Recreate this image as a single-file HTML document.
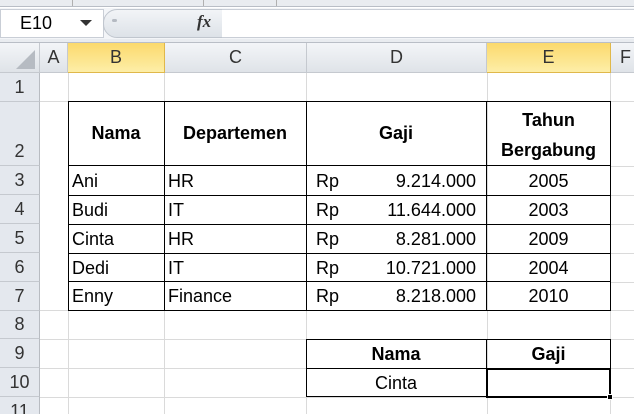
<!DOCTYPE html>
<html><head><meta charset="utf-8"><style>
*{margin:0;padding:0;box-sizing:border-box}
html,body{width:634px;height:414px;overflow:hidden}
body{background:#fff;position:relative;font-family:"Liberation Sans",sans-serif;color:#000}
.a{position:absolute}
.h{background:linear-gradient(#f3f5f8,#dfe3e8);color:#333;font-size:18px;display:flex;align-items:center;justify-content:center;border-right:1px solid #c5c9cf;border-bottom:1px solid #c5c9cf}
.sel{background:linear-gradient(#fbd96c,#fdeea8);border-right:1px solid #e0b84a;border-bottom:1px solid #e0b84a}
.rh{background:#e4e8ee;color:#333;font-size:18px;display:flex;align-items:flex-end;justify-content:center;padding-bottom:3px;border-bottom:1px solid #c5c9cf;border-right:1px solid #b8bcc2}
.vl{position:absolute;width:1px;background:#dadada}
.hl{position:absolute;height:1px;background:#dadada}
.t{position:absolute;font-size:18px;white-space:nowrap;display:flex;align-items:center;height:29px}
.b{font-weight:bold}
.bl{position:absolute;background:#000}
</style></head><body>
<div class="a" style="left:0;top:0;width:634px;height:7px;background:#e9ecf0;border-bottom:1px solid #b9bec6"></div>
<div class="a" style="left:72px;top:0;width:1px;height:6px;background:#b0b0b0"></div>
<div class="a" style="left:203px;top:0;width:1px;height:6px;background:#b0b0b0"></div>
<div class="a" style="left:276px;top:0;width:1px;height:6px;background:#b0b0b0"></div>
<div class="a" style="left:0;top:8px;width:634px;height:32px;background:#f3f5f8"></div>
<div class="a" style="left:0;top:9px;width:104px;height:29px;background:#fff;border:1px solid #c9ced6"></div>
<div class="a" style="left:20px;top:13px;font-size:18px">E10</div>
<div class="a" style="left:80px;top:20px;width:0;height:0;border-left:6px solid transparent;border-right:6px solid transparent;border-top:6px solid #333"></div>
<div class="a" style="left:103px;top:9px;width:120px;height:29px;background:linear-gradient(#f2f4f7,#dde2e8);border-radius:14px 0 0 14px;border:1px solid #c0c6ce"></div>
<div class="a" style="left:112px;top:19px;width:5px;height:3px;background:#b5bac2;border-radius:2px"></div>
<div class="a" style="left:197px;top:12px;font-family:'Liberation Serif',serif;font-style:italic;font-weight:bold;font-size:17px;color:#333">fx</div>
<div class="a" style="left:222px;top:9px;width:412px;height:29px;background:#fff;border-top:1px solid #c9ced6;border-bottom:1px solid #c9ced6"></div>
<div class="a" style="left:0;top:39px;width:634px;height:4px;background:#e9ecf0;border-bottom:1px solid #b9bec6"></div>

<div class="a h" style="left:0;top:43px;width:40px;height:30px"></div>
<div class="a" style="left:16px;top:50px;width:0;height:0;border-left:19px solid transparent;border-bottom:19px solid #b6bbc2"></div>
<div class="a h" style="left:40px;top:43px;width:28px;height:30px">A</div>
<div class="a h sel" style="left:68px;top:43px;width:97px;height:30px">B</div>
<div class="a h" style="left:165px;top:43px;width:142px;height:30px">C</div>
<div class="a h" style="left:307px;top:43px;width:180px;height:30px">D</div>
<div class="a h sel" style="left:487px;top:43px;width:124px;height:30px">E</div>
<div class="a h" style="left:611px;top:43px;width:30px;height:30px">F</div>

<div class="a rh" style="left:0;top:73px;width:40px;height:29px">1</div>
<div class="a rh" style="left:0;top:102px;width:40px;height:64px">2</div>
<div class="a rh" style="left:0;top:166px;width:40px;height:29px">3</div>
<div class="a rh" style="left:0;top:195px;width:40px;height:29px">4</div>
<div class="a rh" style="left:0;top:224px;width:40px;height:29px">5</div>
<div class="a rh" style="left:0;top:253px;width:40px;height:29px">6</div>
<div class="a rh" style="left:0;top:282px;width:40px;height:29px">7</div>
<div class="a rh" style="left:0;top:311px;width:40px;height:28px">8</div>
<div class="a rh" style="left:0;top:339px;width:40px;height:29px">9</div>
<div class="a rh sel" style="left:0;top:368px;width:40px;height:29px">10</div>
<div class="a rh" style="left:0;top:397px;width:40px;height:29px">11</div>

<div class="vl" style="left:68px;top:73px;height:341px"></div>
<div class="vl" style="left:164px;top:73px;height:341px"></div>
<div class="vl" style="left:306px;top:73px;height:341px"></div>
<div class="vl" style="left:487px;top:73px;height:341px"></div>
<div class="vl" style="left:610px;top:73px;height:341px"></div>
<div class="hl" style="left:40px;top:101px;width:594px"></div>
<div class="hl" style="left:40px;top:310px;width:594px"></div>
<div class="hl" style="left:40px;top:339px;width:594px"></div>
<div class="hl" style="left:40px;top:368px;width:594px"></div>
<div class="hl" style="left:40px;top:397px;width:594px"></div>
<div class="hl" style="left:610px;top:166px;width:24px"></div>
<div class="hl" style="left:610px;top:195px;width:24px"></div>
<div class="hl" style="left:610px;top:224px;width:24px"></div>
<div class="hl" style="left:610px;top:253px;width:24px"></div>
<div class="hl" style="left:610px;top:282px;width:24px"></div>

<div class="bl" style="left:68px;top:101px;width:543px;height:1px"></div>
<div class="bl" style="left:68px;top:165px;width:543px;height:1px"></div>
<div class="bl" style="left:68px;top:195px;width:543px;height:1px"></div>
<div class="bl" style="left:68px;top:224px;width:543px;height:1px"></div>
<div class="bl" style="left:68px;top:253px;width:543px;height:1px"></div>
<div class="bl" style="left:68px;top:281px;width:543px;height:1px"></div>
<div class="bl" style="left:68px;top:310px;width:543px;height:1px"></div>
<div class="bl" style="left:68px;top:101px;width:1px;height:210px"></div>
<div class="bl" style="left:164px;top:101px;width:1px;height:210px"></div>
<div class="bl" style="left:306px;top:101px;width:1px;height:210px"></div>
<div class="bl" style="left:486px;top:101px;width:1px;height:210px"></div>
<div class="bl" style="left:610px;top:101px;width:1px;height:210px"></div>

<div class="t b" style="left:68px;top:119px;width:96px;justify-content:center">Nama</div>
<div class="t b" style="left:164px;top:119px;width:142px;justify-content:center">Departemen</div>
<div class="t b" style="left:306px;top:119px;width:180px;justify-content:center">Gaji</div>
<div class="t b" style="left:487px;top:106px;width:123px;justify-content:center">Tahun</div>
<div class="t b" style="left:487px;top:136px;width:123px;justify-content:center">Bergabung</div>

<div class="t" style="left:72px;top:167px">Ani</div>
<div class="t" style="left:72px;top:196px">Budi</div>
<div class="t" style="left:72px;top:225px">Cinta</div>
<div class="t" style="left:72px;top:254px">Dedi</div>
<div class="t" style="left:72px;top:282px">Enny</div>
<div class="t" style="left:168px;top:167px">HR</div>
<div class="t" style="left:168px;top:196px">IT</div>
<div class="t" style="left:168px;top:225px">HR</div>
<div class="t" style="left:168px;top:254px">IT</div>
<div class="t" style="left:168px;top:282px">Finance</div>
<div class="t" style="left:316px;top:167px">Rp</div>
<div class="t" style="left:316px;top:196px">Rp</div>
<div class="t" style="left:316px;top:225px">Rp</div>
<div class="t" style="left:316px;top:254px">Rp</div>
<div class="t" style="left:316px;top:282px">Rp</div>
<div class="t" style="left:340px;top:167px;width:136px;justify-content:flex-end">9.214.000</div>
<div class="t" style="left:340px;top:196px;width:136px;justify-content:flex-end">11.644.000</div>
<div class="t" style="left:340px;top:225px;width:136px;justify-content:flex-end">8.281.000</div>
<div class="t" style="left:340px;top:254px;width:136px;justify-content:flex-end">10.721.000</div>
<div class="t" style="left:340px;top:282px;width:136px;justify-content:flex-end">8.218.000</div>
<div class="t" style="left:487px;top:167px;width:123px;justify-content:center">2005</div>
<div class="t" style="left:487px;top:196px;width:123px;justify-content:center">2003</div>
<div class="t" style="left:487px;top:225px;width:123px;justify-content:center">2009</div>
<div class="t" style="left:487px;top:254px;width:123px;justify-content:center">2004</div>
<div class="t" style="left:487px;top:282px;width:123px;justify-content:center">2010</div>

<div class="bl" style="left:306px;top:339px;width:305px;height:1px"></div>
<div class="bl" style="left:306px;top:368px;width:305px;height:1px"></div>
<div class="bl" style="left:306px;top:396px;width:305px;height:1px"></div>
<div class="bl" style="left:306px;top:339px;width:1px;height:58px"></div>
<div class="bl" style="left:486px;top:339px;width:1px;height:58px"></div>
<div class="bl" style="left:610px;top:339px;width:1px;height:58px"></div>
<div class="a" style="left:486px;top:368px;width:125px;height:30px;border:2px solid #000;background:#fff;box-shadow:inset 0 0 0 1px #fff"></div>
<div class="a" style="left:607px;top:394px;width:6px;height:6px;background:#000;border:1px solid #fff"></div>
<div class="t b" style="left:306px;top:340px;width:180px;justify-content:center">Nama</div>
<div class="t b" style="left:487px;top:340px;width:123px;justify-content:center">Gaji</div>
<div class="t" style="left:306px;top:369px;width:180px;justify-content:center">Cinta</div>
</body></html>
